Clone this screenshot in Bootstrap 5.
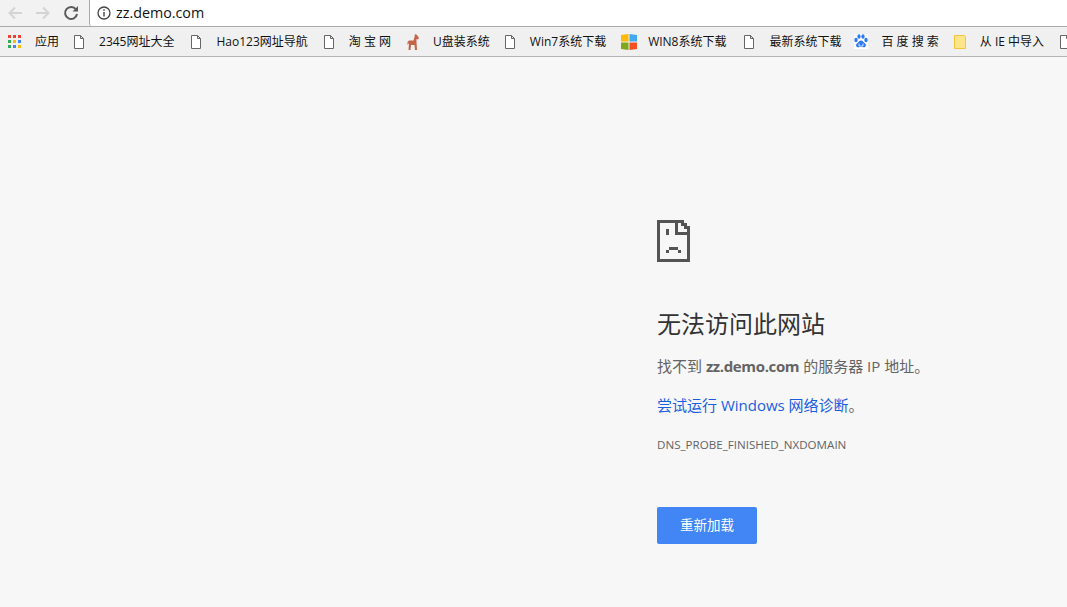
<!DOCTYPE html>
<html lang="zh-CN">
<head>
<meta charset="UTF-8">
<title>zz.demo.com</title>
<link href="https://cdn.jsdelivr.net/npm/bootstrap@5.3.3/dist/css/bootstrap.min.css" rel="stylesheet">
<style>
html, body { height: 100%; }
body { background: #f7f7f7; font-family: "Open Sans", "Noto Sans CJK SC", sans-serif; overflow: hidden; }
.tool-bar { height: 27px; background: #f2f2f2; border-bottom: 1px solid #a9a9a9; }
.nav-btns { width: 89px; padding-left: 7px; gap: 12px; }
.nav-btns svg { display: block; }
.addr-bar { background: #fff; border-left: 1px solid #a9a9a9; border-radius: 0 0 0 3px; padding-left: 7px; gap: 5px; font-size: 14.3px; color: #111; }
.mark-bar { height: 30px; background: #f0f0f0; border-bottom: 1px solid #b4b4b4; padding-left: 8px; font-size: 12px; color: #111; white-space: nowrap; overflow: hidden; }
.mark-item { gap: 14px; margin-right: 15px; flex-shrink: 0; }
.mark-item svg { display: block; flex-shrink: 0; }
.mark-item:nth-child(1) { margin-right: 14px; }
.mark-item:nth-child(2), .mark-item:nth-child(4) { margin-right: 16px; }
.mark-item:nth-child(5) { margin-right: 14px; }
.mark-item:nth-child(7) { gap: 11px; margin-right: 17px; }
.mark-item:nth-child(8) { margin-right: 12px; }
.err-wrap { padding: 163px 0 0 657px; }
.err-icon { display: block; margin-bottom: 46px; }
.err-title { font-size: 24px; line-height: 32px; font-weight: 400; color: #333; margin-bottom: 16px; }
.err-text { font-size: 15px; line-height: 20px; color: #646464; margin-bottom: 19px; }
.err-text.last-line { margin-bottom: 22px; }
.err-text a { color: #1a5ee0; text-decoration: none; }
.err-text b { font-weight: 700; letter-spacing: -.36px; }
.err-code { font-size: 11.6px; line-height: 16px; color: #646464; margin-bottom: 54px; }
.reload-btn { width: 100px; height: 37px; padding: 0; font-size: 13.5px; color: #fff; background: #4285f4; border: 0; border-radius: 2px; }
</style>
</head>
<body>
<div class="tool-bar d-flex">
    <div class="nav-btns d-flex align-items-center">
        <svg width="16" height="16" viewBox="0 0 16 16"><path d="M15 8H3M8 2.500 2.500 8 8 13.500" fill="none" stroke="#d4d4d4" stroke-width="2"/></svg>
        <svg width="16" height="16" viewBox="0 0 16 16"><path d="M1 8h12M8 2.500 13.500 8 8 13.500" fill="none" stroke="#d4d4d4" stroke-width="2"/></svg>
        <svg width="16" height="16" viewBox="0 0 16 16"><path d="M13 4.500A6 6 0 1 0 14 9" fill="none" stroke="#5a5a5a" stroke-width="2"/><path d="M9.500 6.500H15V1z" fill="#5a5a5a"/></svg>
    </div>
    <div class="addr-bar flex-grow-1 d-flex align-items-center">
        <svg width="14" height="14" viewBox="0 0 14 14"><circle cx="7" cy="7" r="6" fill="none" stroke="#444" stroke-width="1.300"/><path d="M6.300 6h1.400v4.500H6.300zM6.300 3.300h1.400v1.400H6.300z" fill="#444"/></svg>
        <span>zz.demo.com</span>
    </div>
</div>
<div class="mark-bar d-flex align-items-center">
    <div class="mark-item d-flex align-items-center">
        <svg width="13" height="13" viewBox="0 0 13 13">
            <rect x="0" y="0" width="3" height="3" fill="#ea4335"/><rect x="5" y="0" width="3" height="3" fill="#ea4335"/><rect x="10" y="0" width="3" height="3" fill="#ea4335"/>
            <rect x="0" y="5" width="3" height="3" fill="#34a853"/><rect x="5" y="5" width="3" height="3" fill="#fbbc05"/><rect x="10" y="5" width="3" height="3" fill="#4285f4"/>
            <rect x="0" y="10" width="3" height="3" fill="#34a853"/><rect x="5" y="10" width="3" height="3" fill="#4285f4"/><rect x="10" y="10" width="3" height="3" fill="#fbbc05"/>
        </svg>
        <span>应用</span>
    </div>
    <div class="mark-item d-flex align-items-center"><svg width="12" height="14" viewBox="0 0 12 14"><path d="M1.500.500h6l3 3v10h-9zM7.500.500v3h3" fill="#fff" stroke="#666"/></svg><span>2345网址大全</span></div>
    <div class="mark-item d-flex align-items-center"><svg width="12" height="14" viewBox="0 0 12 14"><path d="M1.500.500h6l3 3v10h-9zM7.500.500v3h3" fill="#fff" stroke="#666"/></svg><span>Hao123网址导航</span></div>
    <div class="mark-item d-flex align-items-center"><svg width="12" height="14" viewBox="0 0 12 14"><path d="M1.500.500h6l3 3v10h-9zM7.500.500v3h3" fill="#fff" stroke="#666"/></svg><span>淘 宝 网</span></div>
    <div class="mark-item d-flex align-items-center"><svg width="12" height="16" viewBox="0 0 12 16"><path d="M8 0l2 1 2 3-1 1.500L9.500 5v3l.5 8H8l-.5-5H4l-.5 5h-2L2 9 .500 11V8L2 6.500h4.500L7.500 3z" fill="#c4654a"/></svg><span>U盘装系统</span></div>
    <div class="mark-item d-flex align-items-center"><svg width="12" height="14" viewBox="0 0 12 14"><path d="M1.500.500h6l3 3v10h-9zM7.500.500v3h3" fill="#fff" stroke="#666"/></svg><span>Win7系统下载</span></div>
    <div class="mark-item d-flex align-items-center"><svg width="16" height="16" viewBox="0 0 16 16"><path d="M0 1l7.500-1v7.500H0z" fill="#ffb900"/><path d="M8.500 0L16 1v6.500H8.500z" fill="#3fa9f5"/><path d="M0 8.500h7.500V16L0 15z" fill="#7fa81b"/><path d="M8.500 8.500H16V15l-7.500 1z" fill="#f25022"/></svg><span>WIN8系统下载</span></div>
    <div class="mark-item d-flex align-items-center"><svg width="12" height="14" viewBox="0 0 12 14"><path d="M1.500.500h6l3 3v10h-9zM7.500.500v3h3" fill="#fff" stroke="#666"/></svg><span>最新系统下载</span></div>
    <div class="mark-item d-flex align-items-center"><svg width="14" height="15" viewBox="0 0 14 15"><rect width="14" height="15" fill="#fff"/><g fill="#2d78f4"><ellipse cx="2" cy="6" rx="1.700" ry="2.200"/><ellipse cx="5" cy="2.500" rx="1.600" ry="2.200"/><ellipse cx="9" cy="2.500" rx="1.600" ry="2.200"/><ellipse cx="12" cy="6" rx="1.700" ry="2.200"/><path d="M7 6.500c2 0 2.500 2 4 3 2 1.500.5 4-1.500 3.800-1-.1-1.500-.3-2.500-.3s-1.500.2-2.500.3C2.500 13.500 1 11 3 9.500c1.500-1 2-3 4-3z"/></g><path d="M5 9.500v2.500h4V9.500" fill="none" stroke="#fff" stroke-width=".8"/></svg><span>百 度 搜 索</span></div>
    <div class="mark-item d-flex align-items-center"><svg width="12" height="14" viewBox="0 0 12 14"><path d="M.500.500h10l1 1v12h-11z" fill="#fde68a" stroke="#f0c63c"/></svg><span>从 IE 中导入</span></div>
    <div class="mark-item d-flex align-items-center"><svg width="12" height="14" viewBox="0 0 12 14"><path d="M1.500.500h6l3 3v10h-9zM7.500.500v3h3" fill="#fff" stroke="#666"/></svg></div>
</div>
<div class="err-wrap">
    <svg class="err-icon" width="33" height="42" viewBox="0 0 11 14" shape-rendering="crispEdges" fill="#545454">
        <path d="M0 0h9v1h1v1h1v12H0zM1 1v12h9V5H6V1zM7 1v3h3V3H9V2H8V1z" fill-rule="evenodd"/>
        <path d="M3 3h1v2H3zM4 9h3v1H4zM3 10h1v1H3zM7 10h1v1H7z"/>
    </svg>
    <h1 class="err-title">无法访问此网站</h1>
    <p class="err-text">找不到 <b>zz.demo.com</b> 的服务器 IP 地址。</p>
    <p class="err-text last-line"><a href="#">尝试运行 Windows 网络诊断</a>。</p>
    <div class="err-code">DNS_PROBE_FINISHED_NXDOMAIN</div>
    <button type="button" class="btn reload-btn">重新加载</button>
</div>
<script src="https://cdn.jsdelivr.net/npm/bootstrap@5.3.3/dist/js/bootstrap.bundle.min.js"></script>
</body>
</html>
